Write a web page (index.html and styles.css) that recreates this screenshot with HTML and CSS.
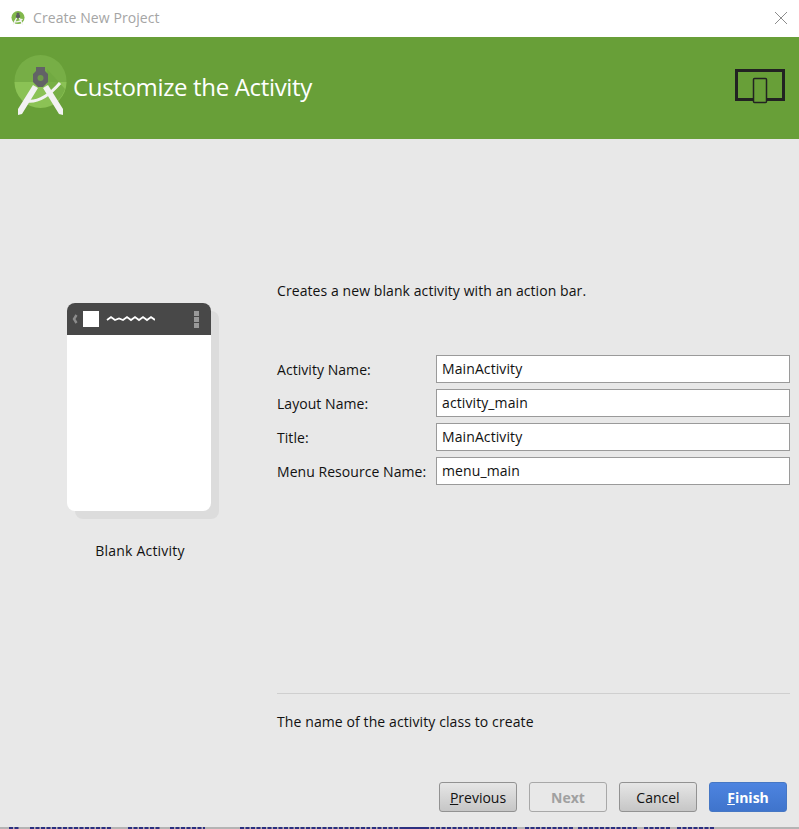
FILE: index.html
```html
<!DOCTYPE html>
<html lang="en">
<head>
<meta charset="utf-8">
<title>Create New Project</title>
<link rel="stylesheet" href="styles.css">
</head>
<body>
<div class="window">
  <div class="titlebar">
    <svg class="title-icon" viewBox="0 0 60 60">
      <circle cx="30" cy="28" r="28" fill="#82b84c"/>
      <path d="M24 8h12v8l3 4v6l-5 5h-8l-5-5v-6l3-4z" fill="#5d5d60"/>
      <path d="M24 30 9 59M36 30l15 29M13 44q20 8 36-10" fill="none" stroke="#f4f4f4" stroke-width="6"/>
    </svg>
    <span class="title-text">Create New Project</span>
    <svg class="close" viewBox="0 0 12 12"><path d="M0 0l12 12M12 0 0 12" stroke="#8c8c8c" stroke-width="1" fill="none"/></svg>
  </div>
  <header class="banner">
    <svg class="logo" viewBox="0 0 56 64">
      <circle cx="26.500" cy="26" r="26" fill="#77ae46"/>
      <path d="M.5 27h52a26 26 0 0 1-52 0z" fill="#8bc255"/>
      <path d="M33 14l18 20a26 26 0 0 1-8 12L33 32z" fill="#6fa640" opacity=".7"/>
      <path d="M22 12h9v4l3 3v8l-5 5h-5l-5-5v-8l3-3z" fill="#626266"/>
      <circle cx="26.500" cy="23" r="3" fill="#6f9a4a"/>
      <path d="M19 30l5 3L8 59l-4 1v-6zM34 30l-5 3 16 26 4 1v-6z" fill="#f2f2f2"/>
      <path d="M10 45.500Q27 50 46 28" fill="none" stroke="#f2f2f2" stroke-width="3"/>
    </svg>
    <h1 class="heading">Customize the Activity</h1>
    <svg class="devices" viewBox="0 0 50 35">
      <rect x="1.500" y="1.500" width="47" height="29" fill="none" stroke="#222" stroke-width="3"/>
      <rect x="18.500" y="9.500" width="13" height="24" rx="1" fill="#689f38" stroke="#222" stroke-width="1.500"/>
    </svg>
  </header>
  <main class="content">
    <section class="preview">
      <div class="phone">
        <div class="phone-bar">
          <svg class="phone-back" viewBox="0 0 6 10"><path d="M4.500 1 2 5l2.500 4" fill="none" stroke="#8c8c8c" stroke-width="2.400"/></svg>
          <span class="phone-square"></span>
          <svg class="phone-wave" viewBox="0 0 49 8"><path d="M1 5l4-3 4 3 4-1.500 4 1.500 4-3 4 3 4-3 4 3 4-3 4 3 4-3 4 3" fill="none" stroke="#fff" stroke-width="1.800"/></svg>
          <span class="phone-menu"><i></i><i></i><i></i></span>
        </div>
      </div>
      <div class="preview-label">Blank Activity</div>
    </section>
    <section class="form">
      <p class="description">Creates a new blank activity with an action bar.</p>
      <div class="fields">
        <label class="field-label">Activity Name:</label><div class="input">MainActivity</div>
        <label class="field-label">Layout Name:</label><div class="input">activity_main</div>
        <label class="field-label">Title:</label><div class="input">MainActivity</div>
        <label class="field-label">Menu Resource Name:</label><div class="input">menu_main</div>
      </div>
      <div class="help">The name of the activity class to create</div>
      <div class="buttons">
        <span class="btn"><u>P</u>revious</span>
        <span class="btn btn-disabled">Next</span>
        <span class="btn">Cancel</span>
        <span class="btn btn-primary"><u>F</u>inish</span>
      </div>
    </section>
  </main>
  <svg class="edge" viewBox="0 0 799 2" preserveAspectRatio="none">
    <path d="M9 1h11M30 1h82M128 1h32M170 1h35M240 1h130M372 1h55M403 1h115M525 1h48M578 1h60M644 1h26M677 1h37" stroke="#2c3080" stroke-width="2" fill="none" stroke-dasharray="4 1.500"/>
  </svg>
</div>
</body>
</html>
```
FILE: styles.css
```css
* { box-sizing: border-box; }
html, body { margin: 0; padding: 0; }
body {
  width: 799px;
  height: 829px;
  overflow: hidden;
  font-family: "Open Sans", "Liberation Sans", sans-serif;
  font-size: 14px;
  color: #111;
  background: #e8e8e8;
}
.window { display: flex; flex-direction: column; height: 829px; }
.titlebar {
  flex: 0 0 37px;
  display: flex;
  align-items: center;
  background: #fff;
  padding: 0 12px 2px 11px;
}
.title-icon { width: 14px; height: 14px; margin-right: 8px; }
.title-text { color: #a5a5a5; font-size: 14px; letter-spacing: .08px; }
.close { width: 12px; height: 12px; margin-left: auto; }
.banner {
  flex: 0 0 102px;
  display: flex;
  align-items: center;
  background: #689f38;
  padding: 0 14px;
}
.logo { width: 56px; height: 64px; margin: 18px 3px 0 0; align-self: flex-start; }
.heading {
  margin: 0 0 4px;
  font-size: 24px;
  font-weight: 400;
  color: #fff;
  letter-spacing: -.34px;
}
.devices { width: 50px; height: 35px; margin-left: auto; margin-top: -3px; }
.content { flex: 1; display: flex; min-height: 0; }
.preview {
  flex: 0 0 277px;
  padding: 164px 0 0 67px;
}
.phone {
  width: 144px;
  height: 208px;
  background: #fff;
  border-radius: 8px;
  box-shadow: 8px 8px 0 #dcdcdc;
  overflow: hidden;
}
.phone-bar {
  height: 32px;
  background: #484848;
  display: flex;
  align-items: center;
  padding-left: 5px;
}
.phone-back { width: 6px; height: 10px; margin-right: 5px; }
.phone-square { width: 16px; height: 16px; background: #fff; margin-right: 7px; }
.phone-wave { width: 49px; height: 8px; }
.phone-menu { display: flex; flex-direction: column; gap: 1px; margin-left: 39px; }
.phone-menu i { width: 5px; height: 5px; background: #999; display: block; }
.preview-label { width: 146px; margin-top: 30px; text-align: center; letter-spacing: .2px; }
.form {
  flex: 1;
  display: flex;
  flex-direction: column;
  padding: 142px 9px 0 0;
}
.description { margin: 0; line-height: 20px; letter-spacing: .08px; }
.fields {
  display: grid;
  grid-template-columns: 159px 1fr;
  grid-auto-rows: 28px;
  row-gap: 6px;
  margin-top: 54px;
  align-items: center;
}
.field-label { letter-spacing: .05px; }
.input {
  height: 28px;
  background: #fff;
  border: 1px solid #9a9a9a;
  padding: 0 5px;
  line-height: 26px;
  letter-spacing: .1px;
}
.help {
  margin-top: 208px;
  border-top: 1px solid #cfcfcf;
  padding-top: 18px;
  line-height: 20px;
  letter-spacing: .1px;
}
.buttons {
  display: flex;
  justify-content: flex-end;
  gap: 12px;
  margin-top: 50px;
  padding-right: 3px;
}
.btn {
  width: 78px;
  height: 30px;
  display: flex;
  align-items: center;
  justify-content: center;
  white-space: pre;
  border: 1px solid #929292;
  border-radius: 3px;
  background: linear-gradient(#e6e6e6, #c6c6c6);
}
.btn-disabled {
  background: #e8e8e8;
  border-color: #a8a8a8;
  color: #a0a0a0;
  font-weight: 700;
}
.btn-primary {
  background: linear-gradient(#4d84e0, #3f74cc);
  border-color: #4677c4;
  color: #fff;
  font-weight: 700;
}
.edge {
  flex: 0 0 2px;
  display: block;
  width: 799px;
  height: 2px;
  background: #b4b4b4;
}
```
